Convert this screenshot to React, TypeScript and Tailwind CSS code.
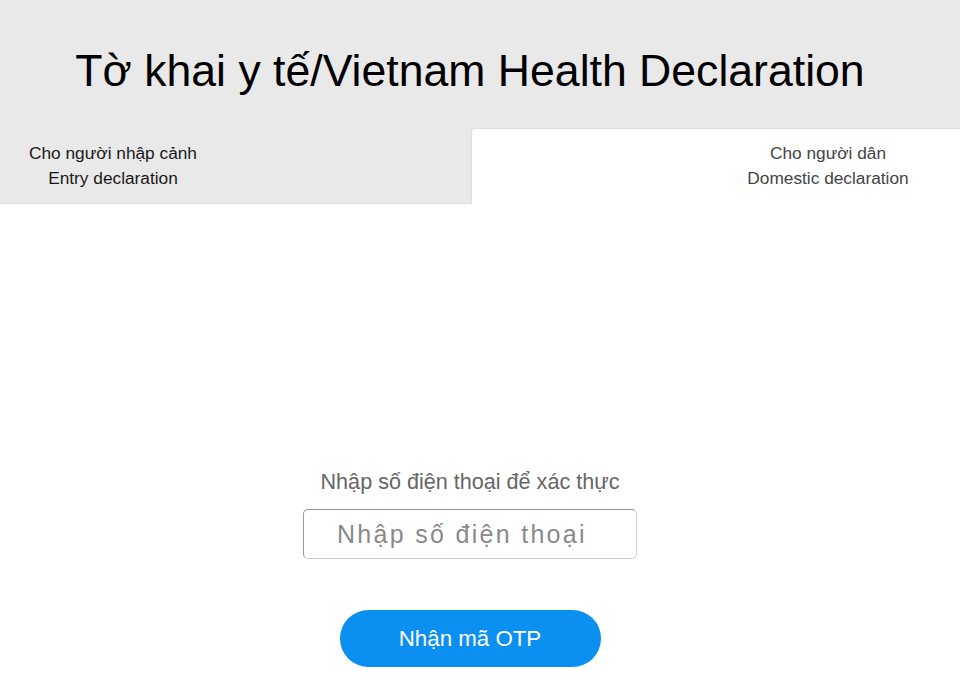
export default function App() {
  return (
    <div
      className="min-h-[696px] w-full bg-white"
      style={{ fontFamily: '"Liberation Sans", Arial, sans-serif' }}
    >
      <div className="bg-[#e9e9e9] pt-[42px]">
        <h1 className="pr-[20px] text-center text-[44.6px] leading-[58px] text-black">
          Tờ khai y tế/Vietnam Health Declaration
        </h1>
        <div className="mt-[28px] flex">
          <div className="h-[76px] w-[471px] border-b border-[#dcdcdc] pl-[18px] pt-[13px] text-[17.3px] leading-[25px] text-[#1a1a1a]">
            <div className="w-[190px] text-center">
              Cho người nhập cảnh
              <br />
              Entry declaration
            </div>
          </div>
          <div className="h-[76px] flex-1 rounded-tl-[4px] border-l border-t border-[#dedede] bg-white pt-[12px] text-[17.3px] leading-[25px] text-[#444]">
            <div className="ml-[264px] w-[184px] text-center">
              Cho người dân
              <br />
              Domestic declaration
            </div>
          </div>
        </div>
      </div>

      <div className="flex flex-col items-center pr-[20px] pt-[265px]">
        <p className="text-[21.6px] leading-[26px] text-[#666]">
          Nhập số điện thoại để xác thực
        </p>
        <input
          type="tel"
          placeholder="Nhập số điện thoại"
          className="mt-[14px] h-[50px] w-[334px] rounded-[5px] border border-[#cfcfcf] border-l-[#9a9a9a] border-t-[#9a9a9a] bg-white pl-[33px] text-[25px] tracking-[2.3px] text-[#555] outline-none placeholder:text-[#8a8a8a]"
        />
        <button className="mt-[51px] h-[57px] w-[261px] rounded-full bg-[#0b8ff1] text-[22.3px] text-white">
          Nhận mã OTP
        </button>
      </div>
    </div>
  );
}
